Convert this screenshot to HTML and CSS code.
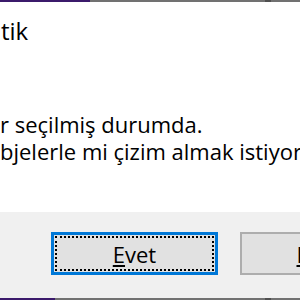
FILE: index.html
```html
<!DOCTYPE html>
<html lang="tr">
  <head>
    <meta charset="UTF-8" />
    <meta name="viewport" content="width=device-width, initial-scale=1.0" />
    <title>Soru</title>
    <link rel="stylesheet" href="styles.css">
  </head>
  <body>
    <div class="frame-edge">
      <span class="edge-active top-active"></span>
      <span class="edge-rest"></span>
      <span class="edge-grip"></span>
      <span class="edge-rest short"></span>
    </div>

    <div class="content">
      <div class="caption">tik</div>
      <div class="message">
        <p>r seçilmiş durumda.</p>
        <p>bjelerle mi çizim almak istiyor</p>
      </div>
    </div>

    <div class="footer">
      <button class="btn btn-default" type="button">
        <span class="focus-ring"><u>E</u>vet</span>
      </button>
      <button class="btn" type="button">
        <span class="focus-ring plain"><u>H</u>ayır</span>
      </button>
    </div>

    <div class="frame-edge">
      <span class="edge-active bottom-active"></span>
      <span class="edge-rest"></span>
      <span class="edge-grip"></span>
      <span class="edge-rest short"></span>
    </div>
  </body>
</html>
```

FILE: styles.css
```css
body {
  margin: 0;
  width: 300px;
  height: 300px;
  overflow: hidden;
  background-color: #ffffff;
  font-family: "Open Sans", "Noto Sans", sans-serif;
  color: #000000;
}

.frame-edge {
  display: flex;
  height: 2px;
}
.edge-active {
  background-color: #3b1a6b;
}
.top-active {
  width: 90px;
}
.bottom-active {
  width: 55px;
}
.edge-rest {
  flex: 1;
  background-color: #717171;
}
.edge-rest.short {
  flex: 0 0 29px;
}
.edge-grip {
  width: 6px;
  background-color: #4f4f4f;
}

.content {
  height: 210px;
  padding-left: 0;
}
.caption {
  padding-top: 14px;
  padding-left: 1px;
  font-size: 24px;
  line-height: 30px;
}
.message {
  margin-top: 65px;
  font-size: 22px;
  line-height: 27px;

  p {
    margin: 0;
    white-space: nowrap;
  }
}

.footer {
  display: flex;
  gap: 22px;
  height: 86px;
  box-sizing: border-box;
  padding: 20px 0 0 51px;
  background-color: #f0f0f0;
}
.btn {
  flex: 0 0 167px;
  height: 43px;
  box-sizing: border-box;
  padding: 1px;
  border: 2px solid #adadad;
  background-color: #e1e1e1;
  font-family: "Open Sans", "Noto Sans", sans-serif;
  font-size: 22px;
  color: #000000;
}
.btn-default {
  border: 3px solid #0078d7;
  padding: 1px;
}
.focus-ring {
  display: flex;
  align-items: center;
  justify-content: center;
  height: 100%;
  box-sizing: border-box;
  border: 2px dotted #000000;
  line-height: 1;
}
.focus-ring.plain {
  border-color: transparent;
}
```
